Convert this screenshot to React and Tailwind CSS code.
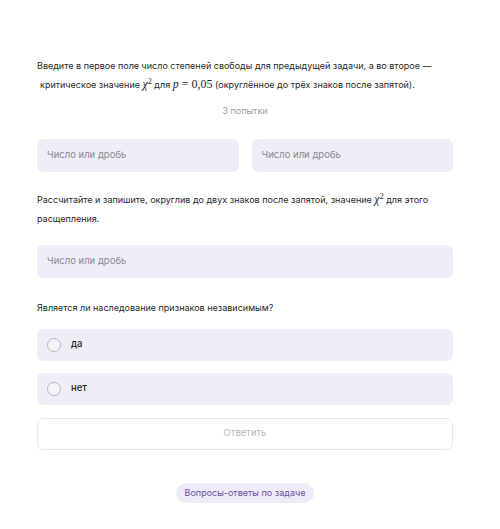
export default function App() {
  const font = { fontFamily: 'Inter, "Noto Sans", sans-serif' };

  const Chi = () => (
    <span className="font-['Liberation_Serif',serif] text-[12px] italic">
      χ<sup className="not-italic text-[8px] -top-[0.5em]">2</sup>
    </span>
  );

  return (
    <div style={font} className="min-h-[529px] w-[500px] bg-white text-[#1f1f1f]">
      <div className="pl-[37px] pr-[47px] pt-[57px]">
        <p className="text-[9px] leading-[18px]">
          Введите в первое поле число степеней свободы для предыдущей задачи, а во второе —
          <br />
          <span className="pl-[3px]">
            критическое значение <Chi /> для{' '}
            <span className="font-['Liberation_Serif',serif] text-[12px]">
              <i>p</i> = 0,05
            </span>{' '}
            (округлённое до трёх знаков после запятой).
          </span>
        </p>

        <div className="mt-[10px] text-center text-[9px] text-[#9a9a9a]">3 попытки</div>

        <div className="mt-[21px] grid grid-cols-2 gap-[13px]">
          <div className="flex h-[33px] items-center rounded-md bg-[#efedf7] px-[10px] text-[9.5px] text-[#8a8794]">
            Число или дробь
          </div>
          <div className="flex h-[33px] items-center rounded-md bg-[#efedf7] px-[10px] text-[9.5px] text-[#8a8794]">
            Число или дробь
          </div>
        </div>

        <p className="mt-[18px] text-[9px] leading-[19px]">
          Рассчитайте и запишите, округлив до двух знаков после запятой, значение <Chi /> для этого
          <br />
          расщепления.
        </p>

        <div className="mt-[17px] flex h-[33px] items-center rounded-md bg-[#efedf7] px-[10px] text-[9.5px] text-[#8a8794]">
          Число или дробь
        </div>

        <p className="mt-[23px] text-[9px] leading-[14px]">Является ли наследование признаков независимым?</p>

        <div className="mt-[14px] flex flex-col gap-[12px]">
          {['да', 'нет'].map((t) => (
            <div key={t} className="flex h-[32px] items-center gap-[10px] rounded-md bg-[#efedf7] px-[10px]">
              <span className="h-[14px] w-[14px] rounded-full border border-[#b9b7c0] bg-[#f5f4fa]" />
              <span className="text-[9.5px] font-medium text-[#222]">{t}</span>
            </div>
          ))}
        </div>

        <div className="mt-[13px] flex h-[32px] items-center justify-center rounded-md border border-[#ebe9ef] bg-white text-[9.5px] text-[#b5b5b5]">
          Ответить
        </div>

        <div className="mt-[33px] flex justify-center">
          <div className="rounded-full bg-[#efeaf8] px-[9px] py-[5px] text-[9px] leading-[10px] text-[#6a4f9a]">
            Вопросы-ответы по задаче
          </div>
        </div>
      </div>
    </div>
  );
}
